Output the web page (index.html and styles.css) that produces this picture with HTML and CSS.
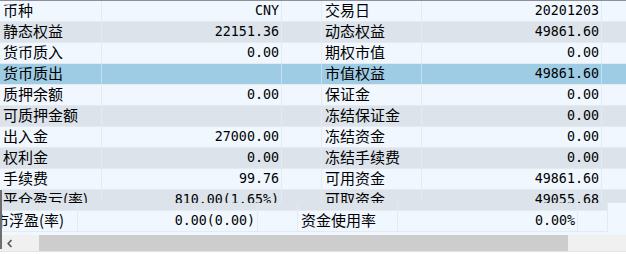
FILE: index.html
```html
<!DOCTYPE html>
<html lang="zh">
<head>
<meta charset="utf-8">
<link rel="stylesheet" href="styles.css">
</head>
<body>
<div class="panel">
  <div class="grid">
    <div class="row light"><div class="cell label">币种</div><div class="cell num">CNY</div><div class="cell"></div><div class="cell label">交易日</div><div class="cell num">20201203</div><div class="cell"></div></div>
    <div class="row gray"><div class="cell label">静态权益</div><div class="cell num">22151.36</div><div class="cell"></div><div class="cell label">动态权益</div><div class="cell num">49861.60</div><div class="cell"></div></div>
    <div class="row light"><div class="cell label">货币质入</div><div class="cell num">0.00</div><div class="cell"></div><div class="cell label">期权市值</div><div class="cell num">0.00</div><div class="cell"></div></div>
    <div class="row selected"><div class="cell label">货币质出</div><div class="cell num"></div><div class="cell"></div><div class="cell label">市值权益</div><div class="cell num">49861.60</div><div class="cell"></div></div>
    <div class="row light"><div class="cell label">质押余额</div><div class="cell num">0.00</div><div class="cell"></div><div class="cell label">保证金</div><div class="cell num">0.00</div><div class="cell"></div></div>
    <div class="row gray"><div class="cell label">可质押金额</div><div class="cell num"></div><div class="cell"></div><div class="cell label">冻结保证金</div><div class="cell num">0.00</div><div class="cell"></div></div>
    <div class="row light"><div class="cell label">出入金</div><div class="cell num">27000.00</div><div class="cell"></div><div class="cell label">冻结资金</div><div class="cell num">0.00</div><div class="cell"></div></div>
    <div class="row gray"><div class="cell label">权利金</div><div class="cell num">0.00</div><div class="cell"></div><div class="cell label">冻结手续费</div><div class="cell num">0.00</div><div class="cell"></div></div>
    <div class="row light"><div class="cell label">手续费</div><div class="cell num">99.76</div><div class="cell"></div><div class="cell label">可用资金</div><div class="cell num">49861.60</div><div class="cell"></div></div>
    <div class="row gray clipped"><div class="cell label">平仓盈亏(率)</div><div class="cell num">810.00(1.65%)</div><div class="cell"></div><div class="cell label">可取资金</div><div class="cell num">49055.68</div><div class="cell"></div></div>
  </div>
  <div class="grid shifted">
    <div class="row gray strip"><div class="cell"></div><div class="cell"></div><div class="cell"></div><div class="cell"></div><div class="cell"></div><div class="cell"></div></div>
    <div class="row light"><div class="cell label">盯市浮盈(率)</div><div class="cell num">0.00(0.00)</div><div class="cell"></div><div class="cell label">资金使用率</div><div class="cell num">0.00%</div><div class="cell"></div></div>
  </div>
  <div class="gap"></div>
  <div class="hscroll">
    <div class="arrow"><svg width="6" height="9" viewBox="0 0 6 9"><polyline points="4.5,1 1.2,4.5 4.5,8" fill="none" stroke="#555" stroke-width="1.6"/></svg></div>
    <div class="thumb"></div>
    <div class="track"></div>
  </div>
  <div class="under"></div>
  <div class="edge"></div>
</div>
</body>
</html>
```

FILE: styles.css
```css
html, body {
  margin: 0;
  padding: 0;
  background: #ffffff;
}
body {
  width: 626px;
  height: 254px;
  overflow: hidden;
}
.panel {
  position: relative;
  width: 626px;
  height: 254px;
  overflow: hidden;
  display: flex;
  flex-direction: column;
  border-top: 1px solid #8a8f98;
  box-sizing: border-box;
  background: #f0f7ff;
}
.grid {
  display: flex;
  flex-direction: column;
  width: 632px;
  flex: none;
}
.shifted {
  margin-left: -24px;
}
.row {
  display: grid;
  grid-template-columns: 102px 180px 40px 100px 180px 30px;
  height: 21px;
  box-sizing: border-box;
  border-bottom: 1px solid #e6e9ee;
  flex: none;
}
.row.light { background: #f0f7ff; }
.row.gray { background: #dce3ea; }
.row.selected { background: #9ecce4; }
.row.selected .cell { border-right-color: #c4dfee; }
.row.clipped {
  height: 13px;
  border-bottom: none;
  overflow: hidden;
}
.row.strip {
  height: 8px;
}
.strip .cell {
  height: 7px;
}
.cell {
  border-right: 1px solid #e6e9ee;
  height: 20px;
  line-height: 20px;
  white-space: nowrap;
  color: #000;
}
.label {
  font-family: "Noto Sans CJK SC", sans-serif;
  font-size: 15px;
  padding-left: 3px;
  line-height: 18px;
}
.num {
  font-family: "DejaVu Sans Mono", monospace;
  font-size: 13.33px;
  text-align: right;
  padding-right: 2px;
  line-height: 20px;
}
.gap {
  height: 3px;
  flex: none;
  background: #f0f7ff;
}
.hscroll {
  display: flex;
  height: 16px;
  flex: none;
  background: #f0f0f0;
}
.arrow {
  width: 39px;
  display: flex;
  align-items: center;
  padding-left: 7px;
  box-sizing: border-box;
}
.arrow svg { display: block; }
.thumb {
  width: 529px;
  background: #cdcdcd;
}
.track {
  flex: 1;
}
.under {
  flex: 1;
  background: #ffffff;
  border-top: 1px solid #e3e3e3;
}
.edge {
  position: absolute;
  left: 0;
  top: 189px;
  width: 2px;
  height: 59px;
  background: #6e6e6e;
}
```
